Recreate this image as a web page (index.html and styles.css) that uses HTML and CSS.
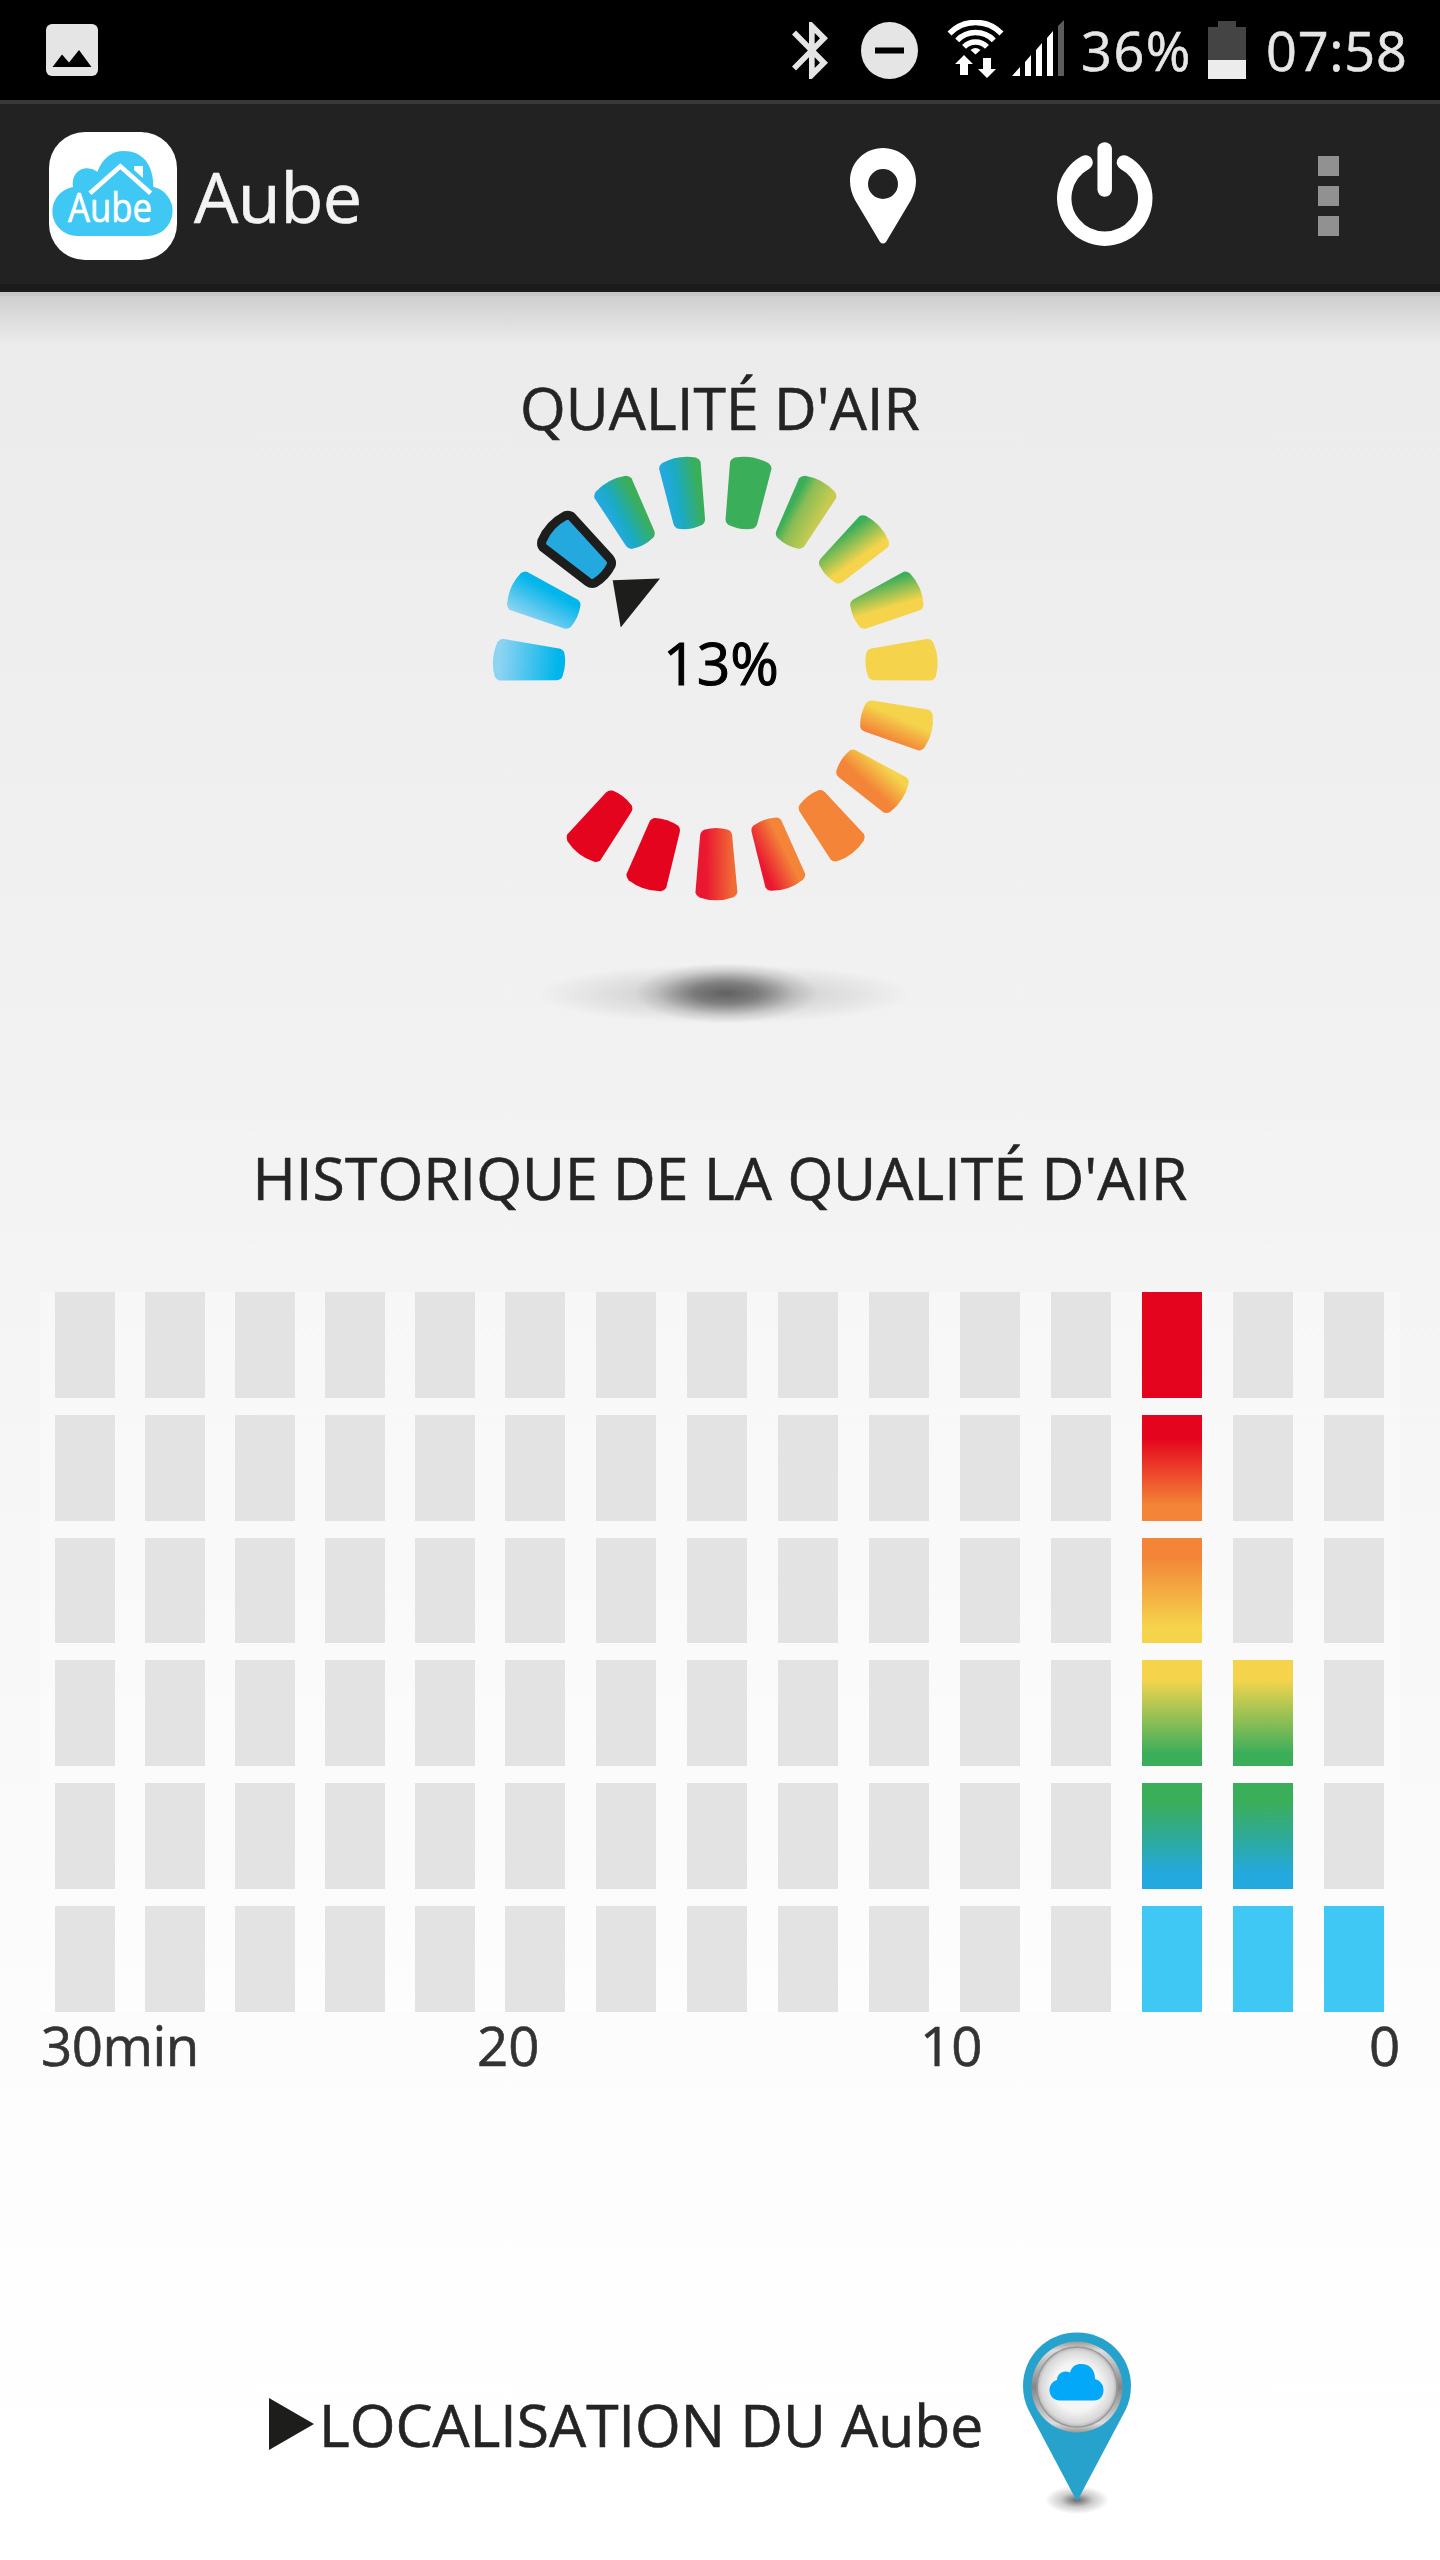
FILE: index.html
```html
<!DOCTYPE html>
<html lang="fr">
<head>
    <meta charset="UTF-8">
    <meta name="viewport" content="width=device-width, initial-scale=1.0">
    <title>Aube</title>
    <link rel="stylesheet" href="styles.css">
</head>
<body>
    <!-- Status bar -->
    <div class="status-bar">
        <svg class="picture-icon" viewBox="0 0 52 52">
            <rect width="52" height="52" rx="6" fill="#e5e5e5"/>
            <path d="M6.500 43L16 30.500L23 38.500L33 26L45.500 43Z" fill="#000"/>
        </svg>
        <div class="status-right">
            <svg class="bluetooth-icon" viewBox="5 2 12.71 20" preserveAspectRatio="none">
                <path fill="#e5e5e5" d="M17.71 7.71L12 2h-1v7.59L6.41 5 5 6.41 10.59 12 5 17.59 6.41 19 11 14.41V22h1l5.71-5.71-4.3-4.29 4.3-4.29zM13 5.83l1.88 1.88L13 9.59V5.83zm1.88 10.46L13 18.17v-3.76l1.88 1.88z"/>
            </svg>
            <svg class="dnd-icon" viewBox="0 0 57 57">
                <circle cx="28.500" cy="28.500" r="28.500" fill="#e5e5e5"/>
                <rect x="14" y="25.500" width="29" height="6" fill="#000"/>
            </svg>
            <svg class="wifi-icon" viewBox="947 20 57 60">
                <g fill="none" stroke="#fff" stroke-width="5.500">
                    <path d="M949.500 33.500A36 36 0 0 1 1001.500 33.500"/>
                    <path d="M957.200 40.300A25.500 25.500 0 0 1 993.800 40.300"/>
                    <path d="M964 46.900A16 16 0 0 1 987 46.900"/>
                </g>
                <path d="M970.500 50Q975.500 46 980.500 50L975.500 54.500Z" fill="#fff"/>
                <path d="M964 55L973 64H968V75H960V64H955Z" fill="#fff"/>
                <path d="M983 58H991V69H996L987 78L978 69H983Z" fill="#fff"/>
            </svg>
            <svg class="signal-icon" viewBox="1012 20 52 56">
                <g fill="#fff">
                    <path d="M1012 76L1020 67V76Z"/>
                    <path d="M1025 62L1031 55V76H1025Z"/>
                    <path d="M1036 50L1042 43V76H1036Z"/>
                    <path d="M1047 38L1053 31V76H1047Z"/>
                </g>
                <path d="M1058 26L1064 20V76H1058Z" fill="#5c5c5c"/>
            </svg>
            <span class="battery-level">36%</span>
            <svg class="battery-icon" viewBox="0 0 38 58">
                <path d="M10 0H28V6H38V39H0V6H10Z" fill="#444"/>
                <rect y="39" width="38" height="19" fill="#ececec"/>
            </svg>
            <span class="clock">07:58</span>
        </div>
    </div>

    <!-- Action bar -->
    <div class="action-bar">
        <svg class="logo" viewBox="147 396 384 384">
            <rect x="147" y="396" width="384" height="384" rx="108" fill="#fff"/>
            <path d="M233 708A74 74 0 0 1 219 561C215 520 240 505 262 505Q280 506 292 515C310 470 340 453 371 453C425 453 460 490 460 560A75 75 0 0 1 443 708Z" fill="#3fc8f3"/>
            <path d="M270 580L361 499L452 580" fill="none" stroke="#fff" stroke-width="14"/>
            <path d="M402 498H429V534L402 510Z" fill="#fff"/>
            <text class="logo-text" x="204" y="666" textLength="252" lengthAdjust="spacingAndGlyphs">Aube</text>
        </svg>
        <h1 class="app-title">Aube</h1>
        <svg class="place-icon" viewBox="850 148 66 96">
            <path fill="#fff" fill-rule="evenodd" d="M883 148C901 148 916 162 916 181C916 188 914 194 911 200L886 242Q883 245 880 242L855 200C852 194 850 188 850 181C850 162 865 148 883 148ZM883 169A15 15 0 1 0 883 199A15 15 0 1 0 883 169Z"/>
        </svg>
        <svg class="power-icon" viewBox="1057 142 96 104">
            <g fill="none" stroke="#fff" stroke-width="14.500" stroke-linecap="round">
                <path d="M1085.500 162.500A40.500 40.500 0 1 0 1124 162.500"/>
                <path d="M1104.700 149.500V189.500"/>
            </g>
        </svg>
        <div class="menu-icon">
            <span></span>
            <span></span>
            <span></span>
        </div>
    </div>

    <!-- Current air quality -->
    <div class="air-quality">
        <h2>QUALITÉ D'AIR</h2>
        <svg class="gauge" viewBox="470 440 500 600">
            <defs>
                <path id="segment" d="M-21 -215Q-20.500 -218 -17 -220Q0 -226 17 -220Q20.500 -218 21 -215L16 -158Q15.500 -154 12 -152.500Q0 -149 -12 -152.500Q-15.500 -154 -16 -158Z"/>
                <linearGradient id="sky" x1="0" y1="0" x2="0" y2="1">
                    <stop offset="0.1" stop-color="#8dd3f2"/>
                    <stop offset="0.9" stop-color="#00b5ea"/>
                </linearGradient>
                <linearGradient id="skySide" x1="0" y1="0.2" x2="0.850" y2="0.350">
                    <stop offset="0" stop-color="#8dd3f2"/>
                    <stop offset="1" stop-color="#00b5ea"/>
                </linearGradient>
                <linearGradient id="blueGreen">
                    <stop offset="0.1" stop-color="#23a9de"/>
                    <stop offset="0.350" stop-color="#1aabc3"/>
                    <stop offset="0.850" stop-color="#3bae5a"/>
                </linearGradient>
                <linearGradient id="greenOlive">
                    <stop offset="0.150" stop-color="#3bae5a"/>
                    <stop offset="0.400" stop-color="#8bbd55"/>
                    <stop offset="0.900" stop-color="#c9cb51"/>
                </linearGradient>
                <linearGradient id="greenYellow" x1="0" y1="0.2" x2="0.9" y2="0.4">
                    <stop offset="0.1" stop-color="#3bae5a"/>
                    <stop offset="0.850" stop-color="#f5d44c"/>
                </linearGradient>
                <linearGradient id="greenYellowShort" x1="0" y1="0.1" x2="0.7" y2="0.25">
                    <stop offset="0.1" stop-color="#3bae5a"/>
                    <stop offset="1" stop-color="#f5d44c"/>
                </linearGradient>
                <linearGradient id="yellowOrange" x1="0.3" y1="0.4" x2="1" y2="0.6">
                    <stop offset="0.1" stop-color="#f5d44c"/>
                    <stop offset="0.9" stop-color="#f38438"/>
                </linearGradient>
                <linearGradient id="yellowOrangeShort" x1="0" y1="0.4" x2="0.7" y2="0.6">
                    <stop offset="0.1" stop-color="#f5d44c"/>
                    <stop offset="0.9" stop-color="#f38438"/>
                </linearGradient>
                <linearGradient id="orangeRed" x1="0.2" y1="0.5" x2="0.9" y2="0.350">
                    <stop offset="0.1" stop-color="#f38438"/>
                    <stop offset="1" stop-color="#ea1730"/>
                </linearGradient>
                <linearGradient id="emberRed">
                    <stop offset="0.1" stop-color="#f06c35"/>
                    <stop offset="0.750" stop-color="#ea1730"/>
                </linearGradient>
                <radialGradient id="shadowCore">
                    <stop offset="0" stop-color="#000" stop-opacity="0.5"/>
                    <stop offset="0.350" stop-color="#000" stop-opacity="0.390"/>
                    <stop offset="0.750" stop-color="#000" stop-opacity="0.1"/>
                    <stop offset="1" stop-color="#000" stop-opacity="0"/>
                </radialGradient>
                <radialGradient id="shadowHalo">
                    <stop offset="0" stop-color="#000" stop-opacity="0.2"/>
                    <stop offset="0.500" stop-color="#000" stop-opacity="0.1"/>
                    <stop offset="1" stop-color="#000" stop-opacity="0"/>
                </radialGradient>
            </defs>
            <g transform="translate(715.3 677.3)">
                <use href="#segment" transform="rotate(-85.3)" fill="url(#sky)"/>
                <use href="#segment" transform="rotate(-66.3)" fill="url(#skySide)"/>
                <use href="#segment" transform="rotate(-28.4)" fill="url(#blueGreen)"/>
                <use href="#segment" transform="rotate(-9.5)" fill="url(#blueGreen)"/>
                <use href="#segment" transform="rotate(9.5)" fill="#3bae5a"/>
                <use href="#segment" transform="rotate(28.4)" fill="url(#greenOlive)"/>
                <use href="#segment" transform="rotate(47.4)" fill="url(#greenYellow)"/>
                <use href="#segment" transform="rotate(66.3)" fill="url(#greenYellowShort)"/>
                <use href="#segment" transform="rotate(85.3)" fill="#f5d44c"/>
                <use href="#segment" transform="rotate(104.2)" fill="url(#yellowOrange)"/>
                <use href="#segment" transform="rotate(123.2)" fill="url(#yellowOrangeShort)"/>
                <use href="#segment" transform="rotate(142.1)" fill="#f38438"/>
                <use href="#segment" transform="rotate(161)" fill="url(#orangeRed)"/>
                <use href="#segment" transform="rotate(179.7)" fill="url(#emberRed)"/>
                <use href="#segment" transform="rotate(198.7)" fill="#e5041d"/>
                <use href="#segment" transform="rotate(217.7)" fill="#e5041d"/>
                <!-- selected level -->
                <use href="#segment" transform="rotate(-47.4)" fill="#23a9de" stroke="#1d1d1b" stroke-width="9"/>
            </g>
            <path d="M612.700 580.300L660 578.500L620.700 627.500Z" fill="#1d1d1b"/>
            <text class="gauge-value" x="721" y="685" text-anchor="middle">13%</text>
            <ellipse cx="724" cy="994" rx="188" ry="30" fill="url(#shadowHalo)"/>
            <ellipse cx="726" cy="993" rx="92" ry="30" fill="url(#shadowCore)"/>
        </svg>
    </div>

    <!-- History chart -->
    <div class="history">
        <h2>HISTORIQUE DE LA QUALITÉ D'AIR</h2>
        <div class="chart">
            <div class="bar"><i></i><i></i><i></i><i></i><i></i><i></i></div>
            <div class="bar"><i></i><i></i><i></i><i></i><i></i><i></i></div>
            <div class="bar"><i></i><i></i><i></i><i></i><i></i><i></i></div>
            <div class="bar"><i></i><i></i><i></i><i></i><i></i><i></i></div>
            <div class="bar"><i></i><i></i><i></i><i></i><i></i><i></i></div>
            <div class="bar"><i></i><i></i><i></i><i></i><i></i><i></i></div>
            <div class="bar"><i></i><i></i><i></i><i></i><i></i><i></i></div>
            <div class="bar"><i></i><i></i><i></i><i></i><i></i><i></i></div>
            <div class="bar"><i></i><i></i><i></i><i></i><i></i><i></i></div>
            <div class="bar"><i></i><i></i><i></i><i></i><i></i><i></i></div>
            <div class="bar"><i></i><i></i><i></i><i></i><i></i><i></i></div>
            <div class="bar"><i></i><i></i><i></i><i></i><i></i><i></i></div>
            <div class="bar"><i class="l6"></i><i class="l5"></i><i class="l4"></i><i class="l3"></i><i class="l2"></i><i class="l1"></i></div>
            <div class="bar"><i></i><i></i><i></i><i class="l3"></i><i class="l2"></i><i class="l1"></i></div>
            <div class="bar"><i></i><i></i><i></i><i></i><i></i><i class="l1"></i></div>
        </div>
        <div class="axis">
            <span>30min</span>
            <span>20</span>
            <span>10</span>
            <span>0</span>
        </div>
    </div>

    <!-- Location link -->
    <div class="location">
        <svg class="play-icon" viewBox="0 0 45 52">
            <path d="M0 0L45 26L0 52Z" fill="#1d1d1b"/>
        </svg>
        <span class="location-text">LOCALISATION DU Aube</span>
        <svg class="location-pin" viewBox="1017 2328 120 192">
            <defs>
                <linearGradient id="ring" x1="0" y1="0" x2="0" y2="1">
                    <stop offset="0" stop-color="#999"/>
                    <stop offset="0.1" stop-color="#ddd"/>
                    <stop offset="0.500" stop-color="#858585"/>
                    <stop offset="0.900" stop-color="#ddd"/>
                    <stop offset="1" stop-color="#999"/>
                </linearGradient>
                <radialGradient id="dial">
                    <stop offset="0.600" stop-color="#f5f5f5"/>
                    <stop offset="0.900" stop-color="#d8d8d8"/>
                    <stop offset="1" stop-color="#b5b5b5"/>
                </radialGradient>
                <radialGradient id="pinShadow">
                    <stop offset="0" stop-color="#000" stop-opacity="0.6"/>
                    <stop offset="0.5" stop-color="#000" stop-opacity="0.2"/>
                    <stop offset="1" stop-color="#000" stop-opacity="0"/>
                </radialGradient>
            </defs>
            <ellipse cx="1077" cy="2500" rx="32" ry="14" fill="url(#pinShadow)"/>
            <path d="M1077 2332.500C1107 2332.500 1131 2356 1131 2386C1131 2395 1129 2403 1125.500 2410L1077 2501.500L1028.500 2410C1025 2403 1023 2395 1023 2386C1023 2356 1047 2332.500 1077 2332.500Z" fill="#27a2cd"/>
            <circle cx="1077" cy="2387" r="45.500" fill="url(#ring)"/>
            <circle cx="1077" cy="2387" r="40" fill="url(#dial)" stroke="#999" stroke-width="1.500"/>
            <path d="M1060 2400.500C1053 2400.500 1049.500 2395 1049.500 2390C1049.500 2385 1053 2381 1057 2380C1057 2374 1063 2369.500 1070 2372.500C1072 2366 1076 2364 1081 2364C1090 2364 1095 2370 1095 2379C1101 2381 1103.500 2385 1103.500 2390C1103.500 2396 1100 2400.500 1094 2400.500Z" fill="#03a8f8"/>
        </svg>
    </div>
</body>
</html>
```
FILE: styles.css
```css
/* Global Styles */
body {
    margin: 0;
    width: 1440px;
    height: 2560px;
    font-family: 'Open Sans', sans-serif;
    color: #242424;
    background: linear-gradient(to bottom, #e9e9e9 0, #ebebeb 292px, #f4f4f4 1292px, #fcfcfc 2020px, #fff 2500px);
    -webkit-text-stroke: 0.6px;
    overflow: hidden;
}

svg {
    display: block;
    flex: none;
}

h1, h2 {
    margin: 0;
    font-weight: 400;
}

h2 {
    font-size: 58.8px;
    line-height: 60px;
    text-align: center;
    letter-spacing: 0.1px;
    white-space: nowrap;
}

/* Status Bar */
.status-bar {
    display: flex;
    justify-content: space-between;
    align-items: center;
    height: 100px;
    padding: 0 28px 0 46px;
    box-sizing: border-box;
    background: #000;
    color: #e6e6e6;
    font-size: 54px;
    line-height: 62px;
}

.picture-icon {
    width: 52px;
    height: 52px;
}

.status-right {
    display: flex;
    align-items: center;
}

.bluetooth-icon {
    width: 36px;
    height: 57px;
    margin-right: 33px;
}

.dnd-icon {
    width: 57px;
    height: 57px;
    margin-right: 29px;
}

.wifi-icon {
    width: 57px;
    height: 60px;
    margin-right: 8px;
}

.signal-icon {
    width: 52px;
    height: 56px;
    margin: 0 17px 4px 0;
}

.battery-level {
    width: 127px;
    letter-spacing: 1.5px;
}

.battery-icon {
    width: 38px;
    height: 58px;
    margin-right: 20px;
}

.clock {
    width: 146px;
    letter-spacing: 0.8px;
}

/* Action Bar */
.action-bar {
    display: flex;
    align-items: center;
    height: 192px;
    padding: 4px 101px 0 49px;
    box-sizing: border-box;
    background: #222;
    border-top: 4px solid #393939;
    border-bottom: 8px solid #1b1b1b;
}

.logo {
    width: 128px;
    height: 128px;
}

.logo-text {
    font-size: 120px;
    fill: #fff;
    stroke: #fff;
    stroke-width: 2px;
}

.app-title {
    flex: 1;
    margin-left: 17px;
    color: #f3f3f3;
    font-size: 70px;
    line-height: 80px;
    letter-spacing: -0.4px;
}

.place-icon {
    width: 66px;
    height: 96px;
    margin-right: 141px;
}

.power-icon {
    width: 96px;
    height: 104px;
    margin: 0 165px 4px 0;
}

.menu-icon {
    display: flex;
    flex-direction: column;
    gap: 10px;
}

.menu-icon span {
    width: 21px;
    height: 20px;
    background: #919191;
}

/* Air Quality */
.air-quality {
    padding-top: 85px;
    background: linear-gradient(rgba(0, 0, 0, 0.16) 4px, rgba(0, 0, 0, 0.12) 4px, rgba(0, 0, 0, 0) 52px);
}

.gauge {
    width: 500px;
    height: 600px;
    margin: 3px auto 0;
}

.gauge-value {
    font-size: 58.8px;
    fill: #000;
    stroke: #000;
    stroke-width: 1px;
}

/* History */
.history {
    padding: 107px 40px 0;
}

.chart {
    display: grid;
    grid-template-columns: repeat(5, 90px) repeat(10, 91px);
    height: 720px;
    margin-top: 85px;
    padding-left: 15px;
    background: rgba(255, 255, 255, 0.3);
    overflow: hidden;
}

.bar {
    display: flex;
    flex-direction: column;
    gap: 17px;
    width: 60px;
    height: 720px;
}

.bar i {
    flex: 1;
    background: #e3e3e3;
}

.bar .l1 {
    background: #3fc8f3;
}

.bar .l2 {
    background: linear-gradient(#3bae5a 18%, #2faa95 50%, #23a9de 85%);
}

.bar .l3 {
    background: linear-gradient(#f5d44c 18%, #3bae5a 88%);
}

.bar .l4 {
    background: linear-gradient(#f38438 18%, #f5d44c 85%);
}

.bar .l5 {
    background: linear-gradient(#e5041d 22%, #f38438 85%);
}

.bar .l6 {
    background: #e5041d;
}

.axis {
    display: grid;
    grid-template-columns: 437px 443px auto 31px;
    margin-top: 3px;
    color: #333;
    font-size: 54.6px;
    line-height: 60px;
}

.axis span:first-child {
    margin-left: 1px;
    letter-spacing: -0.5px;
}

/* Location */
.location {
    display: flex;
    align-items: center;
    height: 192px;
    margin-top: 253px;
    padding-left: 269px;
}

.play-icon {
    width: 45px;
    height: 52px;
    margin-right: 5px;
}

.location-text {
    width: 698px;
    font-size: 58.8px;
    line-height: 60px;
    white-space: nowrap;
}

.location-pin {
    width: 120px;
    height: 192px;
}
```
